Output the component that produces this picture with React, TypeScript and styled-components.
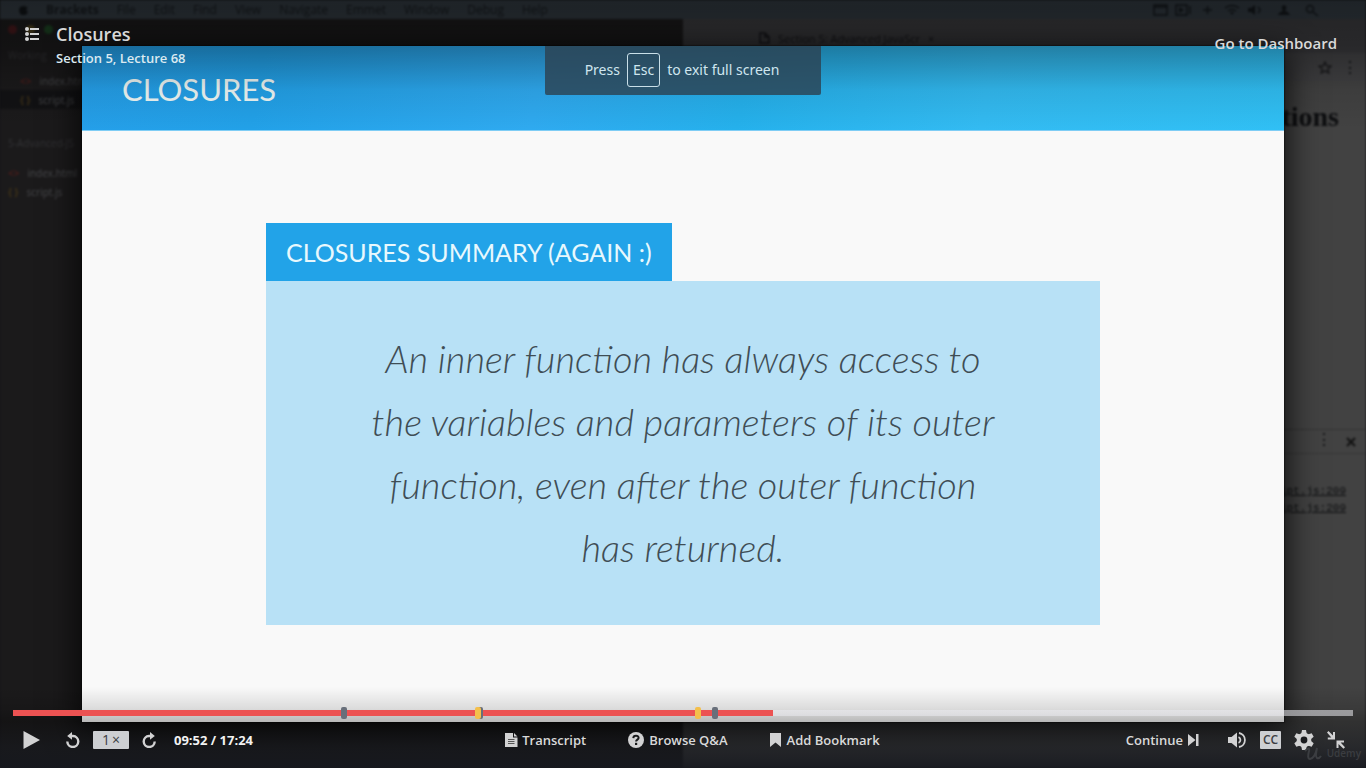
import React from "react";
import styled, { createGlobalStyle, css } from "styled-components";

const Global = createGlobalStyle`
  * { box-sizing: border-box; }
  body { margin: 0; background: #161618; font-family: "Open Sans", sans-serif; color: #d9d9d9; }
  button, a { font: inherit; color: inherit; text-decoration: none; }
  svg { display: block; flex: none; }
`;

const Player = styled.main`
  display: grid;
  grid-template: minmax(100vh, auto) / minmax(0, 1fr);
  overflow: hidden;
  > * { grid-area: 1 / 1; min-width: 0; }
`;

/* ---------- desktop behind the slide ---------- */
const Desktop = styled.div`
  display: flex;
  flex-direction: column;
  background: #1a1a1c;
  filter: blur(1px);
  color: #0d0e10;
`;
const MenuBar = styled.div`
  display: flex;
  align-items: center;
  gap: 18px;
  height: 19px;
  padding: 0 19px;
  background: #323a41;
  font-size: 12px;
  color: #171b1f;
`;
const MenuIcons = styled.div`
  display: flex;
  gap: 12px;
  margin-left: auto;
  padding-right: 14px;
`;
const Windows = styled.div`
  display: flex;
  flex: 1;
`;
const Editor = styled.div`
  flex: 1;
  background: #1b1a1b;
`;
const Lights = styled.div`
  display: flex;
  gap: 9px;
  height: 20px;
  padding: 6px 8px;
  i { width: 9px; height: 9px; border-radius: 50%; background: #46191b; }
  i:nth-child(2) { background: #4a3e1c; }
  i:nth-child(3) { background: #1c4322; }
`;
const FileRow = styled.div<{ $indent?: number; $height?: number; $active?: boolean; $mark?: string }>`
  display: flex;
  align-items: center;
  gap: 8px;
  height: ${(p) => p.$height ?? 19}px;
  padding-left: ${(p) => p.$indent ?? 8}px;
  font-size: 10px;
  color: ${(p) => (p.$mark ? "#48494c" : "#323235")};
  background: ${(p) => (p.$active ? "#121214" : "transparent")};
  b { color: ${(p) => p.$mark}; }
`;
const Browser = styled.div`
  flex: 1;
  display: flex;
  flex-direction: column;
  background: #424242;
`;
const TabStrip = styled.div`
  display: flex;
  align-items: center;
  gap: 8px;
  height: 34px;
  padding: 4px 16px 0 76px;
  background: #3b3b3e;
  font-size: 11px;
  color: #16161a;
`;
const AddressBar = styled.div`
  display: flex;
  align-items: center;
  justify-content: flex-end;
  gap: 10px;
  height: 28px;
  padding-right: 8px;
  background: #414143;
`;
const PageHeading = styled.div`
  flex: 1;
  padding: 18px 27px 0 0;
  text-align: right;
  font: bold 28px/36px "Liberation Serif", serif;
`;
const DevTools = styled.div`
  height: 339px;
  font: 11px/17px "Liberation Mono", monospace;
  text-align: right;
`;
const DevBar = styled.div`
  display: flex;
  justify-content: flex-end;
  align-items: center;
  gap: 14px;
  height: 25px;
  padding-right: 10px;
  border-top: 1px solid #343434;
  border-bottom: 1px solid #373737;
  font-size: 16px;
`;
const DevLog = styled.div`
  padding: 29px 20px 0 0;
  text-decoration: underline;
`;

/* ---------- slide ---------- */
const Slide = styled.section`
  z-index: 0;
  display: flex;
  flex-direction: column;
  margin: 46px 6% 46px;
  background: #f9f9f9;
  font-family: Lato, sans-serif;
  box-shadow: 0 8px 30px 4px rgba(0, 0, 0, 0.75), 0 0 1px 1px rgba(0, 0, 0, 0.3);
`;
const SlideTitle = styled.h1`
  margin: 0;
  height: 85px;
  padding-left: 40px;
  font-size: 31px;
  font-weight: 400;
  line-height: 86px;
  color: #f0f8f6;
  background: linear-gradient(100deg, #259fe9 0%, #22a1e8 15%, #2faaf0 38%, #25b1ec 55%, #33bbf2 75%, #30c0f5 100%);
  border-bottom: 1px solid #7fcdf5;
`;
const Summary = styled.div`
  display: flex;
  flex-direction: column;
  align-items: flex-start;
  width: 834px;
  max-width: 90%;
  margin: 92px auto;
`;
const SummaryTab = styled.h2`
  margin: 0;
  padding: 1px 20px 0;
  font-size: 25px;
  font-weight: 400;
  line-height: 57px;
  color: #e8f8fd;
  background: #22a3e8;
`;
const SummaryText = styled.p`
  margin: 0;
  width: 100%;
  padding: 46px 100px;
  font-size: 38px;
  font-style: italic;
  font-weight: 300;
  line-height: 63px;
  text-align: center;
  color: #3f4d55;
  background: #b8e1f6;
`;

/* ---------- overlays ---------- */
const TopBar = styled.header`
  z-index: 1;
  align-self: start;
  display: flex;
  align-items: flex-start;
  height: 130px;
  padding: 22px 29px 0 24px;
  background: linear-gradient(rgba(0, 0, 0, 0.4), rgba(0, 0, 0, 0.32) 46px, rgba(0, 0, 0, 0.08) 90px, transparent);
`;
const MenuButton = styled.button`
  padding: 5px 0 0;
  margin-right: 16px;
  border: 0;
  background: none;
`;
const Heading = styled.div`
  font-size: 18px;
  line-height: 24px;
  font-weight: 600;
  color: #d8d8d8;
`;
const SubHeading = styled.div`
  font-size: 13px;
  line-height: 24px;
  font-weight: 600;
  color: #dceaf1;
`;
const Dashboard = styled.a`
  margin-left: auto;
  font-size: 15px;
  line-height: 42px;
  font-weight: 600;
`;
const Toast = styled.div`
  z-index: 2;
  justify-self: center;
  align-self: start;
  display: flex;
  align-items: center;
  justify-content: center;
  gap: 7px;
  width: 276px;
  height: 49px;
  margin-top: 46px;
  padding: 0 2px 2px 0;
  border-radius: 0 0 2px 2px;
  font: 14px/20px "Noto Sans", sans-serif;
  color: #cfe6ef;
  background: rgba(44, 66, 82, 0.82);
  white-space: nowrap;
`;
const Key = styled.kbd`
  padding: 6px 5px;
  border: 1px solid #c9dfe8;
  border-radius: 3px;
  font: inherit;
`;
const Controls = styled.footer`
  z-index: 1;
  align-self: end;
  padding: 20px 13px 0;
  background: linear-gradient(
    transparent,
    rgba(0, 0, 0, 0.12) 22px,
    rgba(0, 0, 0, 0.25) 34px,
    rgba(22, 24, 29, 0.6) 60px,
    rgba(22, 24, 30, 0.9)
  );
`;
const Timeline = styled.div`
  position: relative;
  display: flex;
  height: 12px;
`;
const Seek = styled.input`
  appearance: none;
  width: 100%;
  height: 6px;
  margin: 3px 0;
  background: linear-gradient(to right, #ec5252 56.7%, rgba(236, 236, 241, 0.55) 56.7%);
  &::-webkit-slider-thumb { appearance: none; width: 6px; height: 6px; opacity: 0; }
`;
const Marker = styled.i<{ $at: number; $note?: boolean }>`
  position: absolute;
  top: 0;
  left: ${(p) => p.$at}%;
  width: 6px;
  height: 12px;
  border-radius: 2px;
  background: ${(p) => (p.$note ? "#f4bf4b" : "#686f7a")};
`;
const Row = styled.div`
  display: flex;
  align-items: center;
  justify-content: space-between;
  height: 49px;
  padding: 0 8px 7px 10px;
`;
const Group = styled.div<{ $gap: number; $lead?: number }>`
  display: flex;
  align-items: center;
  gap: ${(p) => p.$gap}px;
  padding-left: ${(p) => p.$lead ?? 0}px;
`;
const Control = styled.button<{ $gap?: number }>`
  display: flex;
  align-items: center;
  gap: ${(p) => p.$gap ?? 5}px;
  padding: 0;
  border: 0;
  background: none;
  font-size: 13px;
  line-height: 20px;
  font-weight: 600;
  white-space: nowrap;
`;
const badge = css`
  justify-content: center;
  height: 18px;
  border-radius: 1px;
  color: #3c3e43;
  background: #cdcfd2;
`;
const Speed = styled(Control)`
  ${badge}
  width: 36px;
  gap: 2px;
  font-size: 14px;
  font-weight: 400;
`;
const Captions = styled(Control)`
  ${badge}
  width: 21px;
  font-size: 12px;
`;
const Time = styled.span`
  font-size: 13px;
  font-weight: 700;
  color: #f2f2f2;
`;
const Watermark = styled.div`
  z-index: 2;
  align-self: end;
  justify-self: end;
  display: flex;
  align-items: center;
  gap: 5px;
  padding: 0 5px 5px 0;
  font-size: 10px;
  line-height: 20px;
  font-weight: 600;
  color: #3b3d41;
  pointer-events: none;
`;

const fill = "#d2d2d3";

const ListIcon = () => (
  <svg width="16" height="15" viewBox="0 0 16 15" fill={fill}>
    {[2, 7, 12].map((y) => (
      <g key={y}>
        <circle cx="3" cy={y} r="2" />
        <rect x="6" y={y - 1} width="9" height="2" />
      </g>
    ))}
  </svg>
);
const PlayIcon = () => (
  <svg width="17" height="18" viewBox="0 0 17 18" fill={fill}><path d="M.5 0 17 9 .5 18z" /></svg>
);
const TurnIcon = ({ flip = false }) => (
  <svg width="14" height="16" viewBox="0 0 14 16" fill="none" stroke={fill} strokeWidth="2.4">
    <g transform={flip ? "translate(14 0) scale(-1 1)" : undefined}>
      <path d="M5 4h2a5.500 5.500 0 1 1-5.700 5.600" />
      <path d="M6 0v7.800L1.200 3.900z" fill={fill} stroke="none" />
    </g>
  </svg>
);
const FileIcon = () => (
  <svg width="13" height="14" viewBox="0 0 13 14">
    <path fill={fill} d="M0 0h8v4.5h4.5V14H0zM9 0l3.5 3.6H9z" />
    <path stroke="#555" d="M3 6.5h6.5M3 8.5h6.5M3 10.5h6.5" />
  </svg>
);
const HelpIcon = () => (
  <svg width="16" height="16" viewBox="0 0 16 16">
    <circle cx="8" cy="8" r="8" fill={fill} />
    <path d="M5.3 6.1C5.4 2.8 10.8 3 10.6 6c-.1 1.6-2.5 1.7-2.5 3.5" fill="none" stroke="#17181a" strokeWidth="2" />
    <rect x="7" y="10.8" width="2.2" height="2.2" fill="#17181a" />
  </svg>
);
const BookmarkIcon = () => (
  <svg width="11" height="14" viewBox="0 0 11 14" fill={fill}><path d="M0 0h11v14L5.5 9.6 0 14z" /></svg>
);
const NextIcon = () => (
  <svg width="11" height="12" viewBox="0 0 11 12" fill={fill}><path d="M0 0l7.5 6L0 12zM8 0h2.5v12H8z" /></svg>
);
const VolumeIcon = () => (
  <svg width="19" height="16" viewBox="0 0 19 16" fill="none" stroke={fill} strokeWidth="1.8">
    <path d="M0 5h3.5L9 .5v15L3.5 11H0z" fill={fill} stroke="none" />
    <path d="M10.500 5.200a3 3 0 0 1 0 5.600M11 1a7.100 7.100 0 0 1 0 14" />
  </svg>
);
const GearIcon = () => (
  <svg width="20" height="20" viewBox="0 0 20 20">
    <g fill={fill}>
      {[0, 60, 120].map((a) => (
        <path key={a} d="M8 0h4l.8 4v12l-.8 4H8l-.8-4V4z" transform={`rotate(${a} 10 10)`} />
      ))}
      <circle cx="10" cy="10" r="7.300" />
    </g>
    <circle cx="10" cy="10" r="3.400" fill="#1a1b1e" />
  </svg>
);
const ShrinkIcon = () => (
  <svg width="18" height="18" viewBox="0 0 18 18" fill={fill}>
    <path d="M1.500 0 6 4.400V1h2v7.500H.8v-2h3.500L0 1.600zM9.500 9.500H17v2h-3.400L18 16.200 16.500 17.800 11.500 13v4h-2z" />
  </svg>
);

export default function App() {
  return (
    <>
      <Global />
      <Player>
        <Desktop aria-hidden="true">
          <MenuBar>
            <svg width="9" height="11" viewBox="0 0 9 11" fill="#101417">
              <path d="M6 0 4.500 2.400 3 2.200C-1 3-.500 9 2.500 11h4C8 10 9 8 9 8 7 7 7 4.500 8.600 3.500 7.500 2.200 6 2.300 5 2.500z" />
            </svg>
            <b>Brackets</b>
            {["File", "Edit", "Find", "View", "Navigate", "Emmet", "Window", "Debug", "Help"].map((m) => (
              <span key={m}>{m}</span>
            ))}
            <MenuIcons>
              <svg width="180" height="14" viewBox="0 0 180 14" fill="none" stroke="#14181c" strokeWidth="1.500">
                <path d="M1 2h13v10H1zM1 4h13M23 2h11v10H23zM37 3v8M50 7h9M54.500 3v8M72 5q7-5 14 0M75 8q4-3 8 0M105 4q4 3 0 6M160 9l5 4" />
                <path d="M26 4l5 3-5 3zM77 9h4l-2 3zM95 5h3l4-3v10l-4-3h-3zM125 12q1-3 5-4-3-5 1-6 4 1 1 6 4 1 5 4z" fill="#14181c" stroke="none" />
                <circle cx="157" cy="6" r="3.500" />
              </svg>
            </MenuIcons>
          </MenuBar>
          <Windows>
            <Editor>
              <Lights><i /><i /><i /></Lights>
              <FileRow $height={32}>Working</FileRow>
              <FileRow $indent={20} $mark="#4a1d1b">
                <b>&lt;&gt;</b>index.html
              </FileRow>
              <FileRow $indent={20} $active $mark="#3f3218">
                <b>{"{ }"}</b>script.js
              </FileRow>
              <FileRow $height={20} />
              <FileRow $height={28}>5-Advanced-JS</FileRow>
              <FileRow $height={6} />
              <FileRow $mark="#4a1d1b">
                <b>&lt;&gt;</b>index.html
              </FileRow>
              <FileRow $mark="#3f3218">
                <b>{"{ }"}</b>script.js
              </FileRow>
            </Editor>
            <Browser>
              <TabStrip>
                <svg width="11" height="12" viewBox="0 0 11 12" fill="none" stroke="#16161a" strokeWidth="1.500">
                  <path d="M1 1h5l4 4v6H1zM6 1v4h4" />
                </svg>
                <span>Section 5: Advanced JavaScr</span>
                <span>×</span>
              </TabStrip>
              <AddressBar>
                <svg width="14" height="13" viewBox="0 0 14 13" fill="none" stroke="#1c1c1e" strokeWidth="1.500">
                  <path d="M7 1l1.700 3.800 4.300.400-3.200 2.800 1 4L7 9.900 3.200 12l1-4L1 5.200l4.300-.400z" />
                </svg>
                <span>⋮</span>
              </AddressBar>
              <PageHeading>tions</PageHeading>
              <DevTools>
                <DevBar>
                  <span>⋮</span>
                  <svg width="10" height="10" viewBox="0 0 10 10" stroke="#111" strokeWidth="2"><path d="M1 1l8 8M9 1 1 9" /></svg>
                </DevBar>
                <DevLog>
                  <div>ipt.js:209</div>
                  <div>ipt.js:209</div>
                </DevLog>
              </DevTools>
            </Browser>
          </Windows>
        </Desktop>

        <Slide>
          <SlideTitle>CLOSURES</SlideTitle>
          <Summary>
            <SummaryTab>CLOSURES SUMMARY (AGAIN :)</SummaryTab>
            <SummaryText>
              An inner function has always access to the variables and parameters of its outer function, even
              after the outer function has returned.
            </SummaryText>
          </Summary>
        </Slide>

        <TopBar>
          <MenuButton aria-label="Course content"><ListIcon /></MenuButton>
          <div>
            <Heading>Closures</Heading>
            <SubHeading>Section 5, Lecture 68</SubHeading>
          </div>
          <Dashboard href="#">Go to Dashboard</Dashboard>
        </TopBar>

        <Toast role="status">
          <span>Press</span>
          <Key>Esc</Key>
          <span>to exit full screen</span>
        </Toast>

        <Controls>
          <Timeline>
            <Seek type="range" min={0} max={1044} defaultValue={592} aria-label="Seek" />
            <Marker $at={24.5} />
            <Marker $at={34.6} />
            <Marker $at={34.5} $note />
            <Marker $at={50.9} $note />
            <Marker $at={52.2} />
          </Timeline>
          <Row>
            <Group $gap={26}>
              <Control aria-label="Play"><PlayIcon /></Control>
              <Group $gap={18}>
                <Group $gap={13}>
                  <Control aria-label="Rewind"><TurnIcon /></Control>
                  <Speed>1<span>×</span></Speed>
                  <Control aria-label="Forward"><TurnIcon flip /></Control>
                </Group>
                <Time>09:52 / 17:24</Time>
              </Group>
            </Group>
            <Group $gap={42} $lead={6}>
              <Control $gap={4}><FileIcon />Transcript</Control>
              <Control><HelpIcon />Browse Q&amp;A</Control>
              <Control $gap={6}><BookmarkIcon />Add Bookmark</Control>
            </Group>
            <Group $gap={29}>
              <Control>Continue<NextIcon /></Control>
              <Group $gap={13}>
                <Control aria-label="Volume"><VolumeIcon /></Control>
                <Captions>CC</Captions>
                <Control aria-label="Settings"><GearIcon /></Control>
                <Control aria-label="Exit full screen"><ShrinkIcon /></Control>
              </Group>
            </Group>
          </Row>
        </Controls>

        <Watermark>
          <svg width="18" height="14" viewBox="0 0 18 14" fill="none" stroke="#3b3d41" strokeWidth="2">
            <path d="M1 5q5-5 4 0-2 8 1 8 5-1 7-11-2 9 0 10 2 1 4-2" />
          </svg>
          Udemy
        </Watermark>
      </Player>
    </>
  );
}
